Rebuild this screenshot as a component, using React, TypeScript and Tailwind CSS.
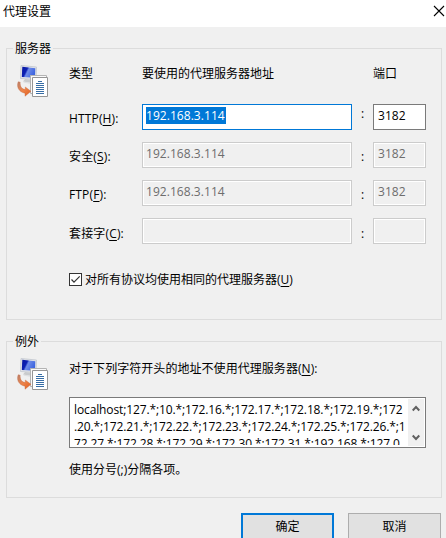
import type { ReactNode } from 'react';

const rows = [
  { name: 'HTTP', accel: 'H', address: '192.168.3.114', port: '3182', active: true },
  { name: '安全', accel: 'S', address: '192.168.3.114', port: '3182', active: false },
  { name: 'FTP', accel: 'F', address: '192.168.3.114', port: '3182', active: false },
  { name: '套接字', accel: 'C', address: '', port: '', active: false },
];

function Accel({ letter, colon = false }: { letter: string; colon?: boolean }) {
  return (
    <>
      (<span className="underline underline-offset-2">{letter}</span>){colon && ':'}
    </>
  );
}

function ProxyIcon() {
  return (
    <svg width="32" height="32" viewBox="0 0 32 32" className="block shrink-0">
      <defs>
        <linearGradient id="screen" x1="0" y1="0" x2="1" y2="0.4">
          <stop offset="0" stopColor="#0a16a0" />
          <stop offset="0.4" stopColor="#0c20b4" />
          <stop offset="0.52" stopColor="#6f8ce8" />
          <stop offset="1" stopColor="#3f66e0" />
        </linearGradient>
        <linearGradient id="arrow" x1="0" y1="0" x2="1" y2="1">
          <stop offset="0" stopColor="#b98370" />
          <stop offset="0.5" stopColor="#ee8348" />
          <stop offset="1" stopColor="#df5f20" />
        </linearGradient>
      </defs>
      <path d="M4 0.5 L19.5 2 L19 14.5 L3.5 13.5 Z" fill="#e2e4e8" stroke="#c2c6ce" strokeWidth="0.8" />
      <path d="M5.3 1.8 L18.3 3.3 L18 12.8 L4.8 12 Z" fill="url(#screen)" />
      <path d="M8 14 L13 14.5 L14 18 L6 16.5 Z" fill="#c9cbcd" />
      <path d="M6 16.5 L14 17.8 L14 19 L7 17.8 Z" fill="#dfe1e3" />
      <path d="M13.5 10.5 H29.5 V28.5 H13.5 Z" fill="#fafafa" stroke="#b4b4b4" />
      <path d="M15.5 12.5 H30.5 V31.5 H15.5 Z" fill="#fff" stroke="#959595" />
      <path d="M21 16.5 H25 M19 18.5 H27 M19 20.5 H27 M19 22.5 H27 M19 24.5 H27 M19 26.5 H27 M19 28.5 H27" stroke="#376da5" />
      <path d="M1.2 16.8 C-0.6 21.5 1.5 27 8 28.2 L8 31.2 L14 26.3 L8.3 22 L8.2 24.6 C4.4 24 2.8 21.2 3.2 17.2 Z" fill="url(#arrow)" stroke="#c4683f" strokeWidth="0.4" />
    </svg>
  );
}

function Field({ value, enabled, selected }: { value: string; enabled: boolean; selected: boolean }) {
  const frame = selected
    ? 'border-[#0078d7] bg-white'
    : enabled
      ? 'border-[#7a7a7a] bg-white text-black'
      : 'border-[#cccccc] bg-[#f0f0f0] text-[#6d6d6d] shadow-[inset_0_0_0_1px_#ffffff]';
  return (
    <div className={`h-[26px] border pt-[2px] pl-[3px] ${frame}`}>
      {value && (
        <span className={`block w-fit text-[12px] leading-[17px] tracking-[0.05px] ${selected ? 'bg-[#0078d7] pr-px text-white' : ''}`}>
          {value}
        </span>
      )}
    </div>
  );
}

function Group({ title, className, children }: { title: string; className: string; children: ReactNode }) {
  return (
    <fieldset className={`mx-0 w-[436px] border border-[#dcdcdc] ${className}`}>
      <legend className="ml-[6px] h-[17px] px-[2px]">{title}</legend>
      <div className="flex pt-2 pl-[10px]">
        <ProxyIcon />
        <div className="ml-[20px] w-[357px]">{children}</div>
      </div>
    </fieldset>
  );
}

function ProxyRow({ row }: { row: (typeof rows)[number] }) {
  return (
    <div className="grid h-[26px] grid-cols-[73px_210px_21px_53px]">
      <span className={`whitespace-nowrap tracking-[0.15px] ${row.name === '套接字' ? 'pt-[7px]' : 'pt-[6px]'}`}>
        {row.name}
        <Accel letter={row.accel} colon />
      </span>
      <Field value={row.address} enabled={row.active} selected={row.active} />
      <span className={`text-center ${row.active ? 'pt-px' : row.port ? 'pt-[6px]' : 'pt-[7px]'}`}>:</span>
      <div className={row.port ? '[&>div]:pl-[4px]' : ''}>
        <Field value={row.port} enabled={row.active} selected={false} />
      </div>
    </div>
  );
}

export default function App() {
  return (
    <div className="flex h-[538px] w-[446px] flex-col overflow-hidden bg-[#f0f0f0] font-['Open_Sans','Noto_Sans_CJK_SC',sans-serif] text-[12px] leading-[17px] text-black">
      <header className="flex h-[27px] shrink-0 items-start justify-between bg-white pt-[3px] pl-[3px]">
        <h1>代理设置</h1>
        <svg width="12" height="12" viewBox="0 0 12 12" className="mt-[2px] mr-px">
          <path d="M1 1 L11 11 M11 1 L1 11" stroke="#000" strokeWidth="1.1" />
        </svg>
      </header>

      <main className="flex flex-col pt-[13px] pl-[6px]">
        <Group title="服务器" className="h-[280px]">
          <div className="grid grid-cols-[73px_231px_53px]">
            <span>类型</span>
            <span>要使用的代理服务器地址</span>
            <span>端口</span>
          </div>
          <div className="mt-[22px] flex flex-col gap-3">
            {rows.map((row) => (
              <ProxyRow key={row.name} row={row} />
            ))}
          </div>
          <div className="mt-[29px] flex h-[13px] items-center">
            <svg width="13" height="13" viewBox="0 0 13 13" className="block">
              <rect x="0.5" y="0.5" width="12" height="12" fill="#fff" stroke="#333" />
              <path d="M2.5 6.5 L5 9.2 L10.7 3.3" fill="none" stroke="#333" strokeWidth="1.2" />
            </svg>
            <span className="ml-[3px] whitespace-nowrap">
              对所有协议均使用相同的代理服务器
              <Accel letter="U" />
            </span>
          </div>
        </Group>

        <Group title="例外" className="mt-[13px] h-[165px]">
          <p className="mt-[2px] whitespace-nowrap tracking-[0.05px]">
            对于下列字符开头的地址不使用代理服务器
            <Accel letter="N" colon />
          </p>
          <div className="mt-[20px] flex h-[51px] border border-[#7a7a7a] bg-white p-px">
            <div className="h-[46px] flex-1 overflow-hidden pt-[2px] pl-[3px] whitespace-pre tracking-[-0.12px]">
              <div>localhost;127.*;10.*;172.16.*;172.17.*;172.18.*;172.19.*;172</div>
              <div>.20.*;172.21.*;172.22.*;172.23.*;172.24.*;172.25.*;172.26.*;1</div>
              <div>72.27.*;172.28.*;172.29.*;172.30.*;172.31.*;192.168.*;127.0</div>
            </div>
            <div className="flex w-[16px] shrink-0 flex-col items-center justify-between bg-[#f0f0f0] pt-[6px] pb-[5px]">
              <svg width="8" height="7" viewBox="0 0 8 7">
                <path d="M0.7 5.5 L4 2 L7.3 5.5" fill="none" stroke="#606060" strokeWidth="2" />
              </svg>
              <svg width="8" height="7" viewBox="0 0 8 7">
                <path d="M0.7 1.5 L4 5 L7.3 1.5" fill="none" stroke="#606060" strokeWidth="2" />
              </svg>
            </div>
          </div>
          <p className="mt-[13px]">使用分号(;)分隔各项。</p>
        </Group>

        <div className="mt-[15px] flex gap-[14px] pl-[235px]">
          <button className="h-[27px] w-[93px] border-2 border-[#0078d7] bg-[#e1e1e1]">确定</button>
          <button className="h-[27px] w-[93px] border border-[#adadad] bg-[#e1e1e1]">取消</button>
        </div>
      </main>
    </div>
  );
}
